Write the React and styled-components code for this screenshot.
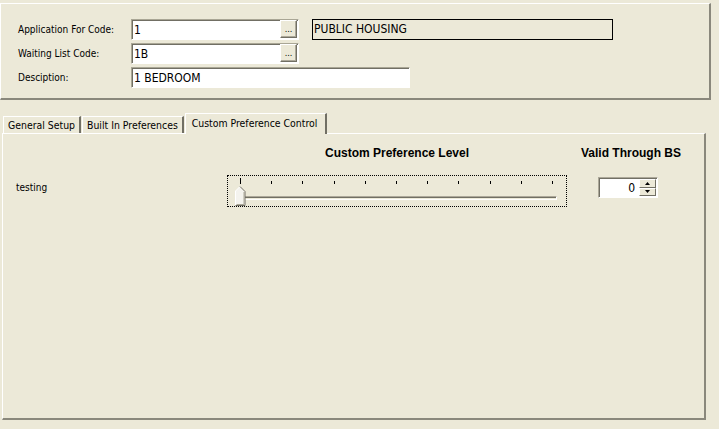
import React from "react";
import styled, { createGlobalStyle } from "styled-components";

const GlobalStyle = createGlobalStyle`
  html, body {
    margin: 0;
    padding: 0;
    background: #ece9d8;
  }
  body {
    font-family: "DejaVu Sans Condensed", "Liberation Sans", sans-serif;
    font-size: 10px;
    color: #000;
  }
`;

const Screen = styled.div`
  width: 719px;
  height: 429px;
  background: #ece9d8;
  overflow: hidden;
  display: flex;
  flex-direction: column;
`;

const HeaderGroup = styled.div`
  margin: 3px 8px 0 0;
  height: 97px;
  box-sizing: border-box;
  border-top: 1px solid #fff;
  border-left: 1px solid #fff;
  border-right: 2px solid #8a887c;
  border-bottom: 2px solid #8a887c;
  padding: 15px 0 0 17px;
  display: grid;
  grid-template-columns: 113px 168px 1fr;
  grid-auto-rows: 21px;
  row-gap: 3px;
  align-items: center;
`;

const Label = styled.span`
  font-family: "DejaVu Sans Condensed", "Liberation Sans", sans-serif;
  font-size: 10px;
  grid-column: 1;
`;

const Field = styled.div`
  grid-column: ${(p) => (p.$wide ? "2 / 4" : "2")};
  display: flex;
  width: ${(p) => p.$width}px;
  height: 21px;
  box-sizing: border-box;
  border-top: 1px solid #a9a695;
  border-left: 1px solid #a9a695;
  border-right: 1px solid #fff;
  border-bottom: 1px solid #fff;
  box-shadow: inset 1px 1px 0 #716f64;
  background: #fff;
  padding: 1px 1px 1px 2px;
`;

const FieldText = styled.div`
  flex: 1;
  font-family: "DejaVu Sans Condensed", "Liberation Sans", sans-serif;
  font-size: 12px;
  line-height: 18px;
  white-space: nowrap;
`;

const LookupButton = styled.div`
  width: 17px;
  height: 18px;
  margin-top: -1px;
  box-sizing: border-box;
  background: #ece9d8;
  border-top: 1px solid #fff;
  border-left: 1px solid #fff;
  border-right: 1px solid #716f64;
  border-bottom: 1px solid #716f64;
  box-shadow: inset -1px -1px 0 #aca899;
  font-size: 9px;
  line-height: 17px;
  text-align: center;
`;

const ReadOnlyBox = styled.div`
  grid-column: 3;
  justify-self: start;
  margin-left: 13px;
  width: 301px;
  height: 21px;
  box-sizing: border-box;
  border: 1px solid #000;
  font-family: "DejaVu Sans Condensed", "Liberation Sans", sans-serif;
  font-size: 12px;
  line-height: 18px;
  padding-left: 1px;
`;

const TabStrip = styled.div`
  margin-top: 12px;
  padding-left: 3px;
  height: 21px;
  display: flex;
  align-items: flex-end;
  position: relative;
  z-index: 1;
`;

const Tab = styled.div`
  box-sizing: border-box;
  height: ${(p) => (p.$active ? 21 : 17)}px;
  margin-bottom: ${(p) => (p.$active ? -1 : 0)}px;
  padding: ${(p) => (p.$active ? "2px 8px 0 6px" : "1px 4px 0 4px")};
  background: #ece9d8;
  border-top: 1px solid #fff;
  border-left: 1px solid #fff;
  border-right: 2px solid #716f64;
  font-family: "DejaVu Sans Condensed", "Liberation Sans", sans-serif;
  font-size: 10.4px;
  line-height: 15px;
  white-space: nowrap;
  margin-right: 1px;
`;

const TabPanel = styled.div`
  margin: 0 13px 0 2px;
  height: 287px;
  box-sizing: border-box;
  border-top: 1px solid #fff;
  border-left: 1px solid #fff;
  border-right: 2px solid #8a887c;
  border-bottom: 2px solid #8a887c;
  padding: 10px 0 0 13px;
  display: grid;
  grid-template-columns: 211px 340px 114px;
  grid-template-rows: 18px auto;
  row-gap: 13px;
`;

const ColumnHeading = styled.div`
  font-family: "Liberation Sans", Arial, sans-serif;
  font-weight: bold;
  font-size: 12px;
  text-align: center;
  align-self: center;
  white-space: nowrap;
  grid-column: ${(p) => p.$col};
  padding-left: ${(p) => p.$indent || 0}px;
`;

const RowLabel = styled.div`
  font-family: "DejaVu Sans Condensed", "Liberation Sans", sans-serif;
  font-size: 10px;
  padding-top: 7px;
`;

const SliderFrame = styled.div`
  position: relative;
  height: 32px;
  box-sizing: border-box;
  border: 1px dotted #000;
  padding: 2px 13px 0 12px;
`;

const TickRow = styled.div`
  display: flex;
  justify-content: space-between;
  width: 313px;
  height: 7px;
`;

const Tick = styled.div`
  width: 1px;
  height: ${(p) => (p.$first ? 6 : 3)}px;
  margin-top: ${(p) => (p.$first ? 0 : 3)}px;
  background: #000;
`;

const Track = styled.div`
  margin: 11px 0 0 -4px;
  width: 321px;
  height: 4px;
  box-sizing: border-box;
  border-top: 1px solid #aca899;
  border-left: 1px solid #aca899;
  border-bottom: 1px solid #fff;
  border-right: 1px solid #fff;
  box-shadow: inset 1px 1px 0 #716f64;
  background: #ece9d8;
`;

const Thumb = styled.svg`
  position: absolute;
  left: 7px;
  top: 10px;
`;

const Spinner = styled.div`
  margin: 2px 0 0 31px;
  display: flex;
  width: 60px;
  height: 21px;
  box-sizing: border-box;
  border-top: 1px solid #aca899;
  border-left: 1px solid #aca899;
  border-right: 1px solid #fff;
  border-bottom: 1px solid #fff;
  box-shadow: inset 1px 1px 0 #716f64;
  background: #fff;
  padding: 1px 1px 1px 2px;
`;

const SpinValue = styled.div`
  flex: 1;
  text-align: right;
  font-family: "DejaVu Sans Condensed", "Liberation Sans", sans-serif;
  font-size: 12px;
  line-height: 18px;
  padding-right: 4px;
`;

const SpinButtons = styled.div`
  display: flex;
  flex-direction: column;
  width: 17px;
`;

const SpinButton = styled.div`
  flex: 1;
  box-sizing: border-box;
  background: #ece9d8;
  border-top: 1px solid #fff;
  border-left: 1px solid #fff;
  border-right: 1px solid #716f64;
  border-bottom: 1px solid #716f64;
  display: flex;
  align-items: center;
  justify-content: center;
`;

const Arrow = ({ up }) => (
  <svg width="5" height="3" viewBox="0 0 5 3">
    <path d={up ? "M2.5 0 L5 3 L0 3 Z" : "M0 0 L5 0 L2.5 3 Z"} fill="#000" />
  </svg>
);

const ticks = Array.from({ length: 11 }, (_, i) => i);

export default function App() {
  return (
    <Screen>
      <GlobalStyle />
      <HeaderGroup>
        <Label>Application For Code:</Label>
        <Field $width={168}>
          <FieldText>1</FieldText>
          <LookupButton>...</LookupButton>
        </Field>
        <ReadOnlyBox>PUBLIC HOUSING</ReadOnlyBox>

        <Label>Waiting List Code:</Label>
        <Field $width={168}>
          <FieldText>1B</FieldText>
          <LookupButton>...</LookupButton>
        </Field>

        <Label>Desciption:</Label>
        <Field $width={279} $wide>
          <FieldText>1 BEDROOM</FieldText>
        </Field>
      </HeaderGroup>

      <TabStrip>
        <Tab>General Setup</Tab>
        <Tab>Built In Preferences</Tab>
        <Tab $active>Custom Preference Control</Tab>
      </TabStrip>

      <TabPanel>
        <span />
        <ColumnHeading $col={2}>Custom Preference Level</ColumnHeading>
        <ColumnHeading $col={3} $indent={14}>
          Valid Through BS
        </ColumnHeading>

        <RowLabel>testing</RowLabel>
        <SliderFrame>
          <TickRow>
            {ticks.map((t) => (
              <Tick key={t} $first={t === 0} />
            ))}
          </TickRow>
          <Track />
          <Thumb width="11" height="20" viewBox="0 0 11 20">
            <path d="M0.5 19.5 V5 L5 0.5 L10 5.5 V19.5 Z" fill="#f4f3ee" />
            <path d="M0.5 19 V5 L5 0.5" fill="none" stroke="#fff" />
            <path d="M5 0.5 L10 5.5 V19.5 H0.5" fill="none" stroke="#716f64" />
            <path d="M1.5 18.5 H9 V6" fill="none" stroke="#aca899" />
          </Thumb>
        </SliderFrame>
        <Spinner>
          <SpinValue>0</SpinValue>
          <SpinButtons>
            <SpinButton>
              <Arrow up />
            </SpinButton>
            <SpinButton>
              <Arrow />
            </SpinButton>
          </SpinButtons>
        </Spinner>
      </TabPanel>
    </Screen>
  );
}
